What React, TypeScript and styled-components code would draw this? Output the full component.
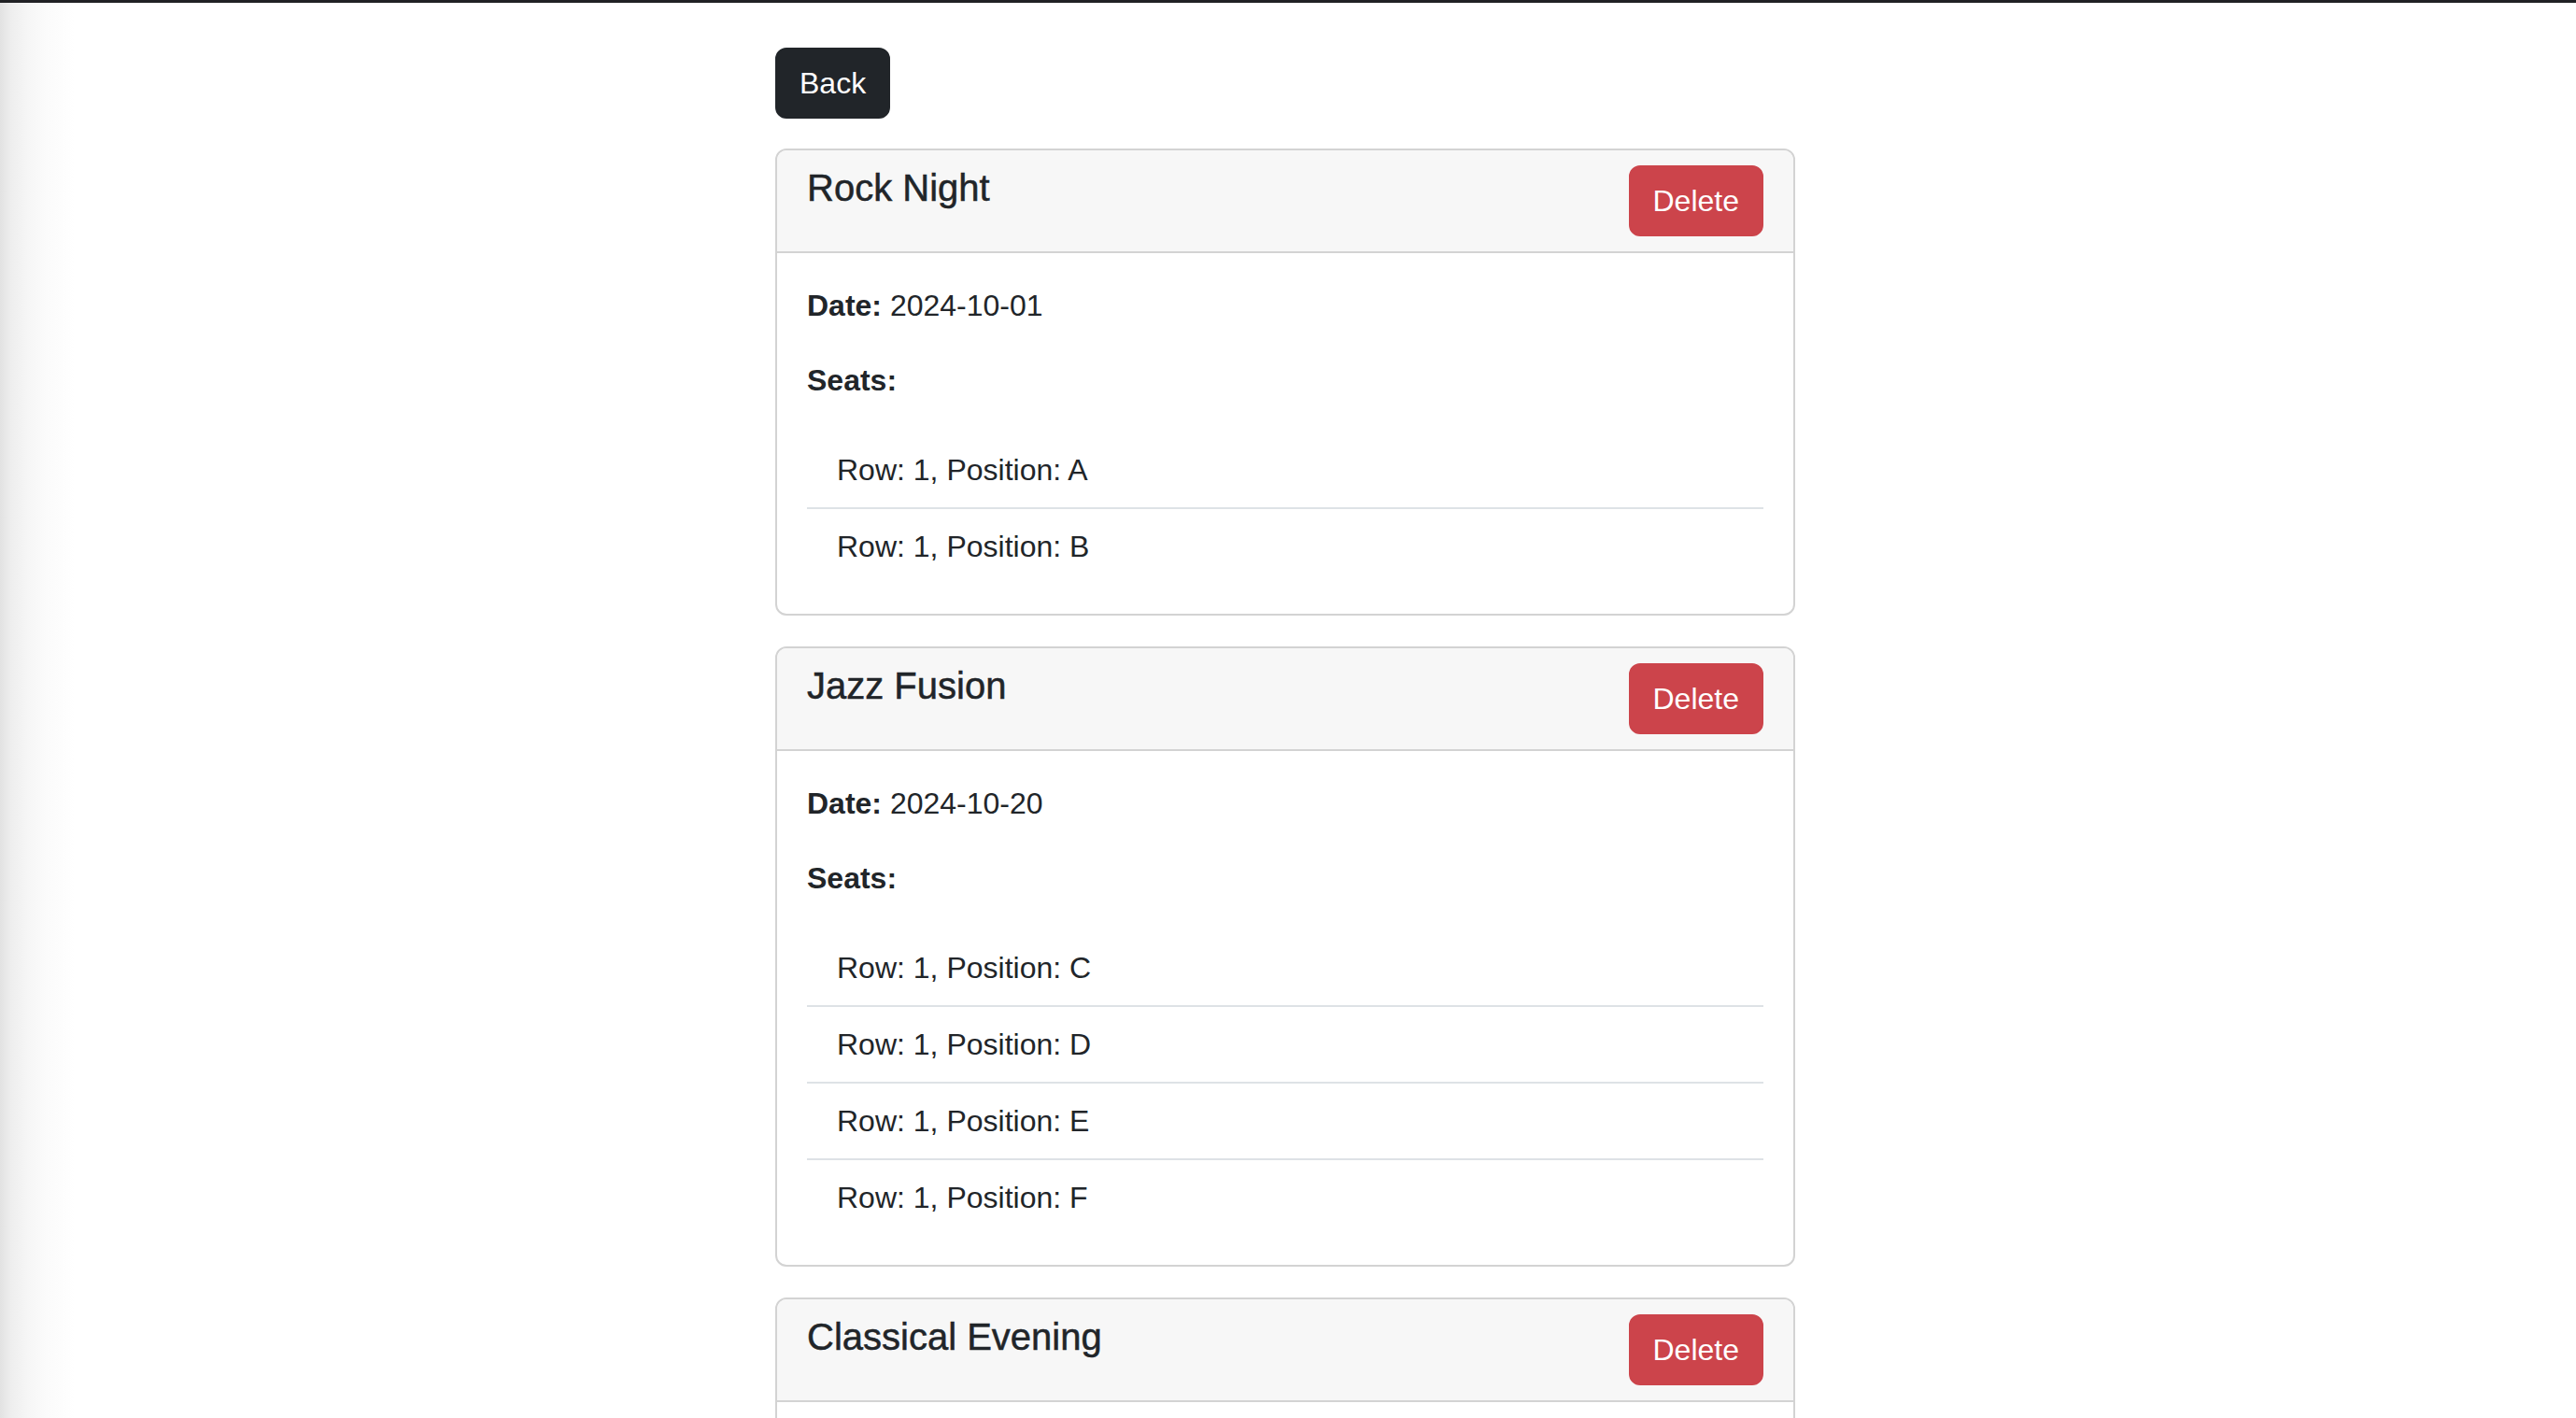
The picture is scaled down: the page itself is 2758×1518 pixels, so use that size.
import React from "react";
import styled, { createGlobalStyle } from "styled-components";

const GlobalStyle = createGlobalStyle`
  html, body {
    margin: 0;
    padding: 0;
  }
  body {
    font-family: "Liberation Sans", Arial, Helvetica, sans-serif;
    font-size: 32px;
    line-height: 1.5;
    color: #212529;
    background: #ffffff;
  }
  * { box-sizing: border-box; }
`;

const Page = styled.div`
  min-height: 100vh;
  border-top: 3px solid #202124;
  background:
    linear-gradient(
      to right,
      #e2e2e2 0px,
      #eeeeee 12px,
      #f6f6f6 30px,
      #fbfbfb 50px,
      #ffffff 80px
    );
`;

const Column = styled.main`
  width: 1092px;
  margin-left: calc(50% - 549px);
  padding-top: 48px;
  display: flex;
  flex-direction: column;
  align-items: flex-start;
`;

const Button = styled.button<{ $variant: "dark" | "danger" }>`
  font-family: inherit;
  font-size: 32px;
  line-height: 48px;
  padding: 12px 24px;
  border: 2px solid ${(p) => (p.$variant === "dark" ? "#212529" : "#cc444b")};
  border-radius: 12px;
  background: ${(p) => (p.$variant === "dark" ? "#212529" : "#cc444b")};
  color: #ffffff;
  cursor: pointer;
  flex-shrink: 0;
`;

const BackButton = styled(Button)`
  margin-bottom: 32px;
`;

const Card = styled.section`
  width: 100%;
  border: 2px solid #d3d3d3;
  border-radius: 12px;
  background: #ffffff;
  margin-bottom: 33px;
  overflow: hidden;
`;

const CardHeader = styled.header`
  display: flex;
  justify-content: space-between;
  padding: 16px 32px;
  background: #f7f7f7;
  border-bottom: 2px solid #d3d3d3;
`;

const Title = styled.h5`
  margin: 0;
  font-size: 40px;
  line-height: 48px;
  font-weight: 500;
  color: #212529;
  -webkit-text-stroke: 0.5px #212529;
`;

const CardBody = styled.div`
  padding: 32px;
`;

const Para = styled.p`
  margin: 0 0 32px;
`;

const SeatList = styled.ul`
  list-style: none;
  margin: 0;
  padding: 0;
`;

const SeatItem = styled.li`
  padding: 16px 32px;
  border-bottom: 2px solid #dee2e6;
  &:last-child {
    border-bottom: none;
  }
`;

type Concert = {
  name: string;
  date?: string;
  seats: { row: number; position: string }[];
};

const concerts: Concert[] = [
  {
    name: "Rock Night",
    date: "2024-10-01",
    seats: [
      { row: 1, position: "A" },
      { row: 1, position: "B" },
    ],
  },
  {
    name: "Jazz Fusion",
    date: "2024-10-20",
    seats: [
      { row: 1, position: "C" },
      { row: 1, position: "D" },
      { row: 1, position: "E" },
      { row: 1, position: "F" },
    ],
  },
  {
    name: "Classical Evening",
    date: "2024-11-05",
    seats: [
      { row: 2, position: "A" },
      { row: 2, position: "B" },
    ],
  },
];

export default function App() {
  return (
    <>
      <GlobalStyle />
      <Page>
        <Column>
          <BackButton $variant="dark">Back</BackButton>
          {concerts.map((c) => (
            <Card key={c.name}>
              <CardHeader>
                <Title>{c.name}</Title>
                <Button $variant="danger">Delete</Button>
              </CardHeader>
              <CardBody>
                <Para>
                  <strong>Date:</strong> {c.date}
                </Para>
                <Para>
                  <strong>Seats:</strong>
                </Para>
                <SeatList>
                  {c.seats.map((s) => (
                    <SeatItem key={s.position}>
                      Row: {s.row}, Position: {s.position}
                    </SeatItem>
                  ))}
                </SeatList>
              </CardBody>
            </Card>
          ))}
        </Column>
      </Page>
    </>
  );
}
